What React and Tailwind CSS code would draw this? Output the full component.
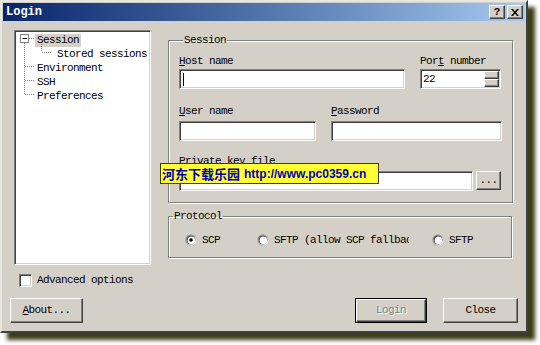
import React from "react";

const mono = { fontFamily: '"Liberation Mono", "DejaVu Sans Mono", monospace' };
const t = "text-[11px] tracking-[-0.6px]";

// win2000-style 3D edges
const sunken =
  "border border-t-[#808080] border-l-[#808080] border-b-white border-r-white shadow-[inset_1px_1px_0_#404040,inset_-1px_-1px_0_#d4d0c8]";
const raised =
  "border border-t-white border-l-white border-b-[#404040] border-r-[#404040] shadow-[inset_-1px_-1px_0_#808080,inset_1px_1px_0_#d4d0c8]";

function Field({ className = "", children }) {
  return <div className={`relative h-[20px] bg-white ${sunken} ${className}`}>{children}</div>;
}

function Label({ children, className = "" }) {
  return <div className={`h-[12px] leading-[12px] ${t} text-black whitespace-nowrap ${className}`}>{children}</div>;
}

function Radio({ checked, label, className = "" }) {
  return (
    <div className={`flex items-center gap-[5px] ${className}`}>
      <div className="relative w-[12px] h-[12px] shrink-0">
        <svg width="12" height="12" viewBox="0 0 12 12">
          <circle cx="6" cy="6" r="5.5" fill="#808080" />
          <circle cx="6.5" cy="6.5" r="5" fill="white" />
          <circle cx="6" cy="6" r="4.5" fill="#404040" />
          <circle cx="6.4" cy="6.4" r="3.8" fill="white" />
          {checked && <circle cx="6" cy="6" r="1.8" fill="black" />}
        </svg>
      </div>
      <span className={`${t} whitespace-nowrap`}>{label}</span>
    </div>
  );
}

function Button({ children, className = "", def = false }) {
  const inner = (
    <div className={`w-full h-full flex items-center justify-center bg-[#d4d0c8] ${raised} ${t}`}>
      {children}
    </div>
  );
  if (def) {
    return <div className={`border border-black ${className}`}>{inner}</div>;
  }
  return <div className={className}>{inner}</div>;
}

function TreeRow({ children, indent, selected }) {
  return (
    <div className="h-[14px] flex items-center" style={{ paddingLeft: indent }}>
      <span className={`px-[2px] leading-[13px] ${t} ${selected ? "bg-[#d4d0c8]" : ""}`}>{children}</span>
    </div>
  );
}

export default function App() {
  return (
    <div className="w-[540px] h-[345px] bg-white relative overflow-hidden" style={mono}>
      <div className="w-[528px] h-[333px] bg-[#d4d0c8] border-2 border-t-[#e8e6e0] border-l-[#e8e6e0] border-b-[#404040] border-r-[#404040] shadow-[7px_7px_4px_rgba(40,40,0,0.9)] flex flex-col">
        {/* title bar */}
        <div className="mx-[1px] mt-[1px] h-[18px] flex items-center justify-between bg-gradient-to-r from-[#0a246a] to-[#a6caf0] pl-[3px] pr-[2px]">
          <span className="text-white font-bold text-[12px]">Login</span>
          <div className="flex gap-[2px]">
            <div className={`w-[16px] h-[14px] bg-[#d4d0c8] ${raised} flex items-center justify-center text-[11px] font-bold leading-none`}>?</div>
            <div className={`w-[16px] h-[14px] bg-[#d4d0c8] ${raised} flex items-center justify-center`}>
              <svg width="8" height="7" viewBox="0 0 8 7">
                <path d="M0 0h2l2 2.5L6 0h2L5 3.5 8 7H6L4 4.5 2 7H0l3-3.5z" fill="black" />
              </svg>
            </div>
          </div>
        </div>

        {/* body */}
        <div className="flex pl-[12px] pt-[9px]">
          {/* left column */}
          <div className="w-[137px] flex flex-col">
            <div className={`relative h-[235px] bg-white ${sunken} pt-[2px]`}>
              <svg className="absolute left-0 top-0" width="60" height="100">
                <rect x="5.5" y="3.5" width="8" height="8" fill="white" stroke="#808080" />
                <line x1="7.5" y1="7.5" x2="12" y2="7.5" stroke="black" />
                <g stroke="#808080" strokeDasharray="1 1">
                  <line x1="14" y1="7.5" x2="20" y2="7.5" />
                  <line x1="9.5" y1="12" x2="9.5" y2="64" />
                  <line x1="10" y1="35.5" x2="20" y2="35.5" />
                  <line x1="10" y1="49.5" x2="20" y2="49.5" />
                  <line x1="10" y1="63.5" x2="20" y2="63.5" />
                  <line x1="26.5" y1="13" x2="26.5" y2="21" />
                  <line x1="27" y1="21.5" x2="37" y2="21.5" />
                </g>
              </svg>
              <TreeRow indent={20} selected>Session</TreeRow>
              <TreeRow indent={40}>Stored sessions</TreeRow>
              <TreeRow indent={20}>Environment</TreeRow>
              <TreeRow indent={20}>SSH</TreeRow>
              <TreeRow indent={20}>Preferences</TreeRow>
            </div>
            <div className="flex items-center mt-[7px] ml-[5px] gap-[5px]">
              <div className={`w-[13px] h-[13px] bg-white ${sunken}`} />
              <span className={t}>Advanced options</span>
            </div>
          </div>

          {/* right column */}
          <div className="ml-[17px] w-[344px] flex flex-col">
            <fieldset className="border border-[#808080] shadow-[1px_1px_0_white,inset_1px_1px_0_white] h-[169px] pl-[10px] pr-[10px] mt-[4px]">
              <legend className={`${t} px-[1px] ml-[4px] leading-[12px]`}>Session</legend>
              <div className="flex mt-[9px]">
                <div className="w-[226px]">
                  <Label><u>H</u>ost name</Label>
                  <Field className="mt-[2px] w-[226px]">
                    <div className="absolute left-[3px] top-[3px] w-[1px] h-[13px] bg-black" />
                  </Field>
                </div>
                <div className="ml-[15px]">
                  <Label>Por<u>t</u> number</Label>
                  <Field className="mt-[2px] w-[81px] flex items-center">
                    <span className={`${t} pl-[2px]`}>22</span>
                    <div className="absolute right-[1px] top-[1px] flex flex-col">
                      <div className={`w-[15px] h-[8px] bg-[#d4d0c8] ${raised}`} />
                      <div className={`w-[15px] h-[8px] bg-[#d4d0c8] ${raised}`} />
                    </div>
                  </Field>
                </div>
              </div>
              <div className="flex mt-[16px]">
                <div className="w-[137px]">
                  <Label><u>U</u>ser name</Label>
                  <Field className="mt-[4px] w-[137px]" />
                </div>
                <div className="ml-[15px]">
                  <Label><u>P</u>assword</Label>
                  <Field className="mt-[4px] w-[171px]" />
                </div>
              </div>
              <div className="mt-[14px]">
                <Label>Private key file</Label>
                <div className="flex mt-[4px]">
                  <Field className="w-[294px]" />
                  <Button className="ml-[3px] w-[25px] h-[19px]">...</Button>
                </div>
              </div>
            </fieldset>

            <fieldset className="border border-[#808080] shadow-[1px_1px_0_white,inset_1px_1px_0_white] h-[48px] mt-[7px]">
              <legend className={`${t} px-[1px] ml-[4px] leading-[12px]`}>Protocol</legend>
              <div className="flex items-center mt-[10px] pl-[16px]">
                <Radio checked label="SCP" className="w-[72px]" />
                <Radio label="SFTP (allow SCP fallback)" className="w-[152px] overflow-hidden" />
                <Radio label="SFTP" className="ml-[23px]" />
              </div>
            </fieldset>
          </div>
        </div>

        {/* buttons */}
        <div className="flex mt-[9px] pl-[8px] pr-[8px]">
          <Button className="w-[73px] h-[25px]"><span><u>A</u>bout...</span></Button>
          <Button def className="ml-auto w-[72px] h-[25px]">
            <span className="text-[#808080] [text-shadow:1px_1px_0_white]">Login</span>
          </Button>
          <Button className="ml-[16px] w-[75px] h-[25px]">Close</Button>
        </div>
      </div>

      {/* watermark */}
      <div className="absolute left-[160px] top-[163px] w-[219px] h-[21px] bg-[#ffff33] border border-[#404000] flex items-center pl-[1px] whitespace-nowrap">
        <span className="text-[13px] font-bold text-[#0000b0]" style={{ fontFamily: '"Noto Sans CJK SC", sans-serif' }}>河东下载乐园</span>
        <span className="ml-[4px] text-[12px] font-bold text-[#0000b0]" style={{ fontFamily: '"Liberation Sans", Arial, sans-serif' }}>http://www.pc0359.cn</span>
      </div>
    </div>
  );
}
